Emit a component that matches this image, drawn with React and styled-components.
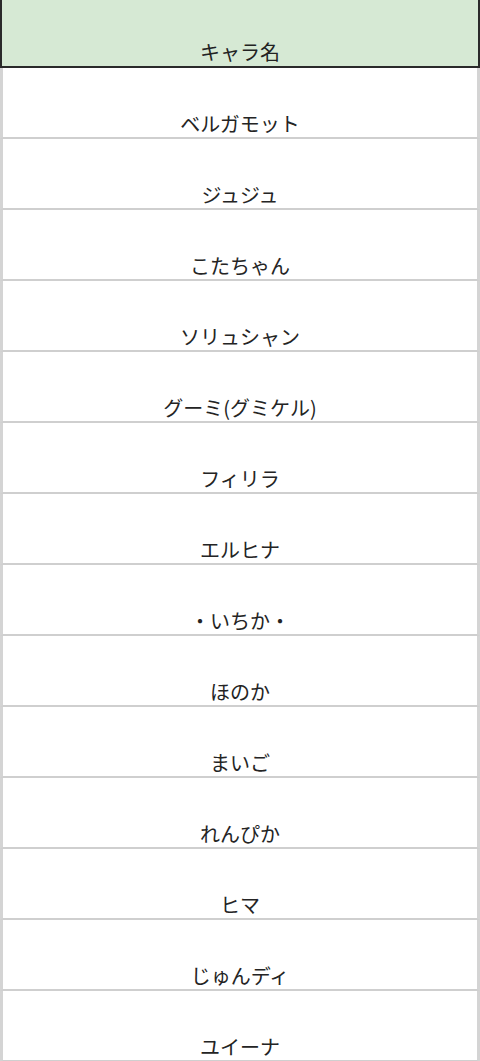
import React from 'react'
import styled, { createGlobalStyle } from 'styled-components'

const GlobalStyle = createGlobalStyle`
  html, body {
    margin: 0;
    padding: 0;
    background: #ffffff;
  }
  body {
    font-family: "Noto Sans CJK JP", "Noto Sans", sans-serif;
    color: #222222;
  }
`

const Sheet = styled.div`
  width: 480px;
  height: 1061px;
  overflow: hidden;
  display: flex;
  flex-direction: column;
`

const HeaderCell = styled.div`
  height: 68px;
  box-sizing: border-box;
  background: #d6e9d4;
  border: 2px solid #2a2a2a;
  border-top: none;
  display: flex;
  align-items: flex-end;
  justify-content: center;
  padding-bottom: 2px;
  font-size: 20px;
  line-height: 24px;
  flex-shrink: 0;
`

const Row = styled.div`
  height: 71px;
  box-sizing: border-box;
  flex-shrink: 0;
  border-left: 3px solid #d4d4d4;
  border-right: 3px solid #d4d4d4;
  border-bottom: 2px solid #cfcfcf;
  display: flex;
  align-items: flex-end;
  justify-content: center;
  padding-bottom: 1px;
  font-size: 20px;
  line-height: 24px;
  color: #242424;
`

const names = [
  'ベルガモット',
  'ジュジュ',
  'こたちゃん',
  'ソリュシャン',
  'グーミ(グミケル)',
  'フィリラ',
  'エルヒナ',
  '・いちか・',
  'ほのか',
  'まいご',
  'れんぴか',
  'ヒマ',
  'じゅんディ',
  'ユイーナ'
]

export default function App() {
  return (
    <>
      <GlobalStyle />
      <Sheet>
        <HeaderCell>キャラ名</HeaderCell>
        {names.map((n) => (
          <Row key={n}>{n}</Row>
        ))}
      </Sheet>
    </>
  )
}
